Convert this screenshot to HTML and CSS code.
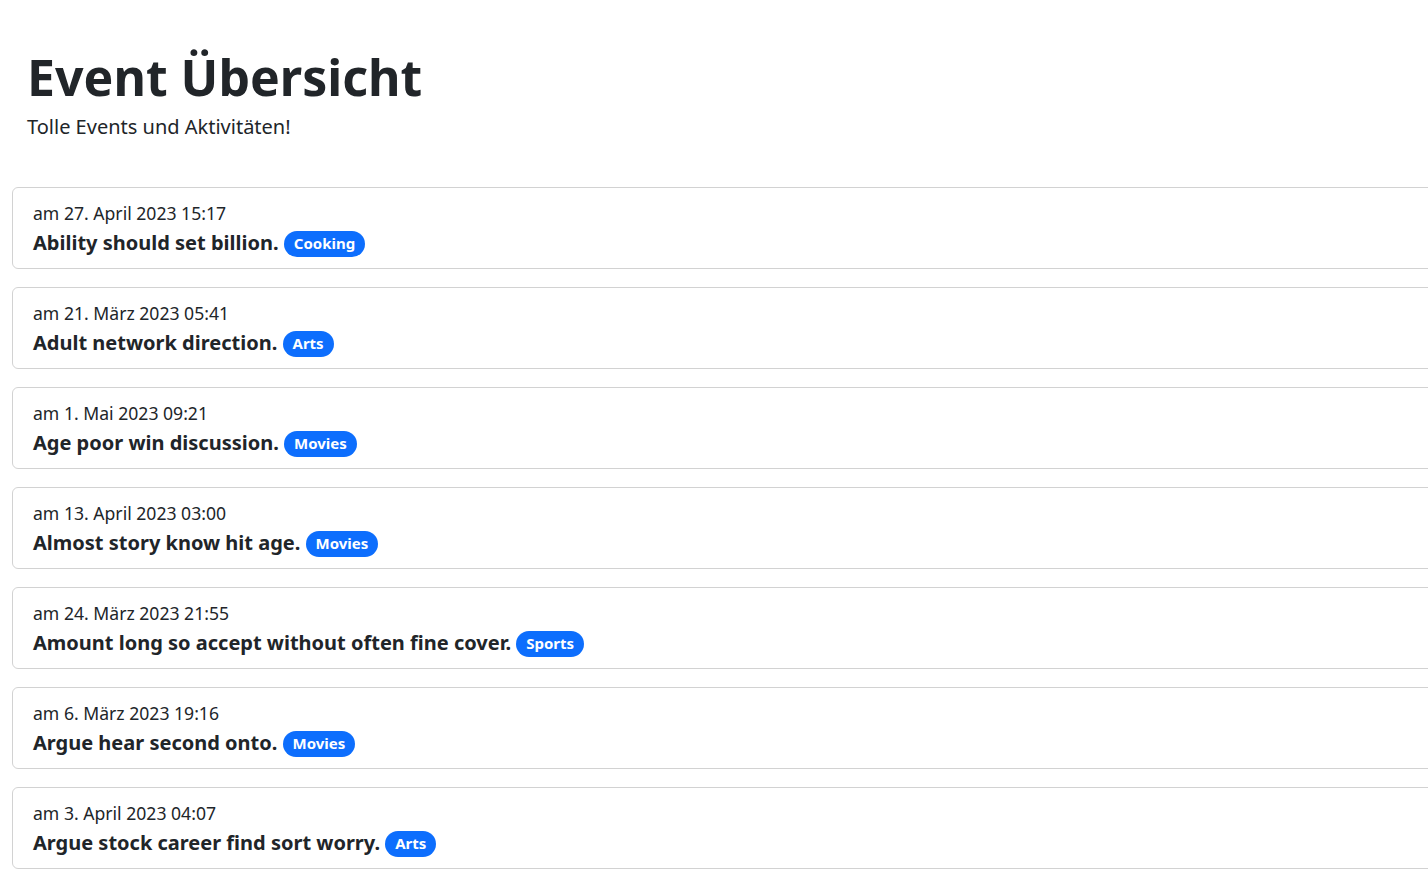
FILE: index.html
```html
<!DOCTYPE html>
<html lang="de">
<head>
    <meta charset="UTF-8">
    <meta name="viewport" content="width=device-width, initial-scale=1.0">
    <title>Event Übersicht</title>
    <link rel="stylesheet" href="styles.css">
</head>
<body>
    <div class="page">
        <header class="intro">
            <h1>Event Übersicht</h1>
            <p class="lead">Tolle Events und Aktivitäten!</p>
        </header>

        <!-- Event list -->
        <div class="event-list">
            <div class="event-card">
                <div class="event-date">am 27. April 2023 15:17</div>
                <h5 class="event-title">Ability should set billion. <span class="badge">Cooking</span></h5>
            </div>
            <div class="event-card">
                <div class="event-date">am 21. März 2023 05:41</div>
                <h5 class="event-title">Adult network direction. <span class="badge">Arts</span></h5>
            </div>
            <div class="event-card">
                <div class="event-date">am 1. Mai 2023 09:21</div>
                <h5 class="event-title">Age poor win discussion. <span class="badge">Movies</span></h5>
            </div>
            <div class="event-card">
                <div class="event-date">am 13. April 2023 03:00</div>
                <h5 class="event-title">Almost story know hit age. <span class="badge">Movies</span></h5>
            </div>
            <div class="event-card">
                <div class="event-date">am 24. März 2023 21:55</div>
                <h5 class="event-title">Amount long so accept without often fine cover. <span class="badge">Sports</span></h5>
            </div>
            <div class="event-card">
                <div class="event-date">am 6. März 2023 19:16</div>
                <h5 class="event-title">Argue hear second onto. <span class="badge">Movies</span></h5>
            </div>
            <div class="event-card">
                <div class="event-date">am 3. April 2023 04:07</div>
                <h5 class="event-title">Argue stock career find sort worry. <span class="badge">Arts</span></h5>
            </div>
        </div>
    </div>
</body>
</html>
```

FILE: styles.css
```css
html, body {
    overflow-x: hidden;
}

body {
    margin: 0;
    font-family: "Noto Sans", "Open Sans", sans-serif;
    font-size: 16px;
    line-height: 1.5;
    color: #212529;
    background-color: #ffffff;
}

.intro {
    padding: 47px 16px 0 27px;
    margin-bottom: 45px;
}

.intro h1 {
    margin: 0 0 5px;
    font-size: 50px;
    font-weight: 700;
    line-height: 1.2;
}

.lead {
    margin: 0;
    font-size: 20px;
}

.event-list {
    margin: 0 -20px 0 12px;
}

.event-card {
    padding: 12px 20px 10px;
    margin-bottom: 17.6px;
    border: 1px solid rgba(0, 0, 0, 0.175);
    border-radius: 6px;
}

.event-date {
    font-size: 17.6px;
}

.event-title {
    margin: 2px 0 0;
    font-size: 20px;
    font-weight: 700;
    line-height: 1.5;
}

.badge {
    display: inline-block;
    padding: 5.5px 10px;
    font-size: 15px;
    font-weight: 700;
    line-height: 1;
    color: #ffffff;
    background-color: #0d6efd;
    border-radius: 50rem;
    vertical-align: 1px;
}
```
